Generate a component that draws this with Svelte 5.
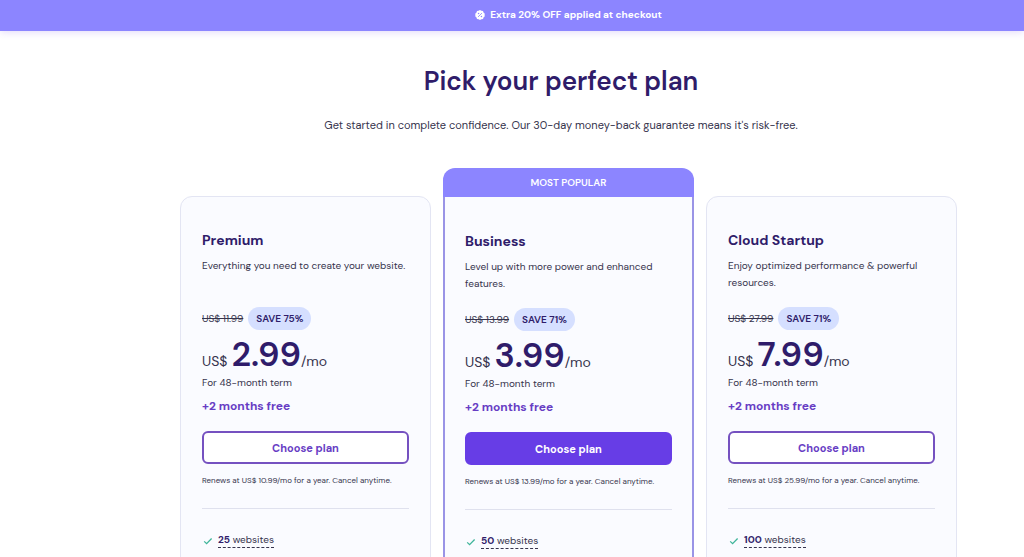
<script lang="ts">
  const plans = [
    { name: "Premium", about: "Everything you need to create your website.", old: "11.99", save: 75, price: "2.99", renew: "10.99", sites: 25, popular: false },
    { name: "Business", about: "Level up with more power and enhanced features.", old: "13.99", save: 71, price: "3.99", renew: "13.99", sites: 50, popular: true },
    { name: "Cloud Startup", about: "Enjoy optimized performance & powerful resources.", old: "27.99", save: 71, price: "7.99", renew: "25.99", sites: 100, popular: false },
  ];
</script>

<div class="banner">
  <svg width="10" height="10" viewBox="0 0 24 24" aria-hidden="true">
    <path fill="#fff" d="M12 0l3.4 2 3.8.3 1.2 3.6L23.5 9 23 12l.5 3-3.1 3.1-1.2 3.6-3.8.3L12 24l-3.4-2-3.8-.3-1.2-3.6L.5 15 1 12 .5 9l3.1-3.1 1.2-3.6 3.8-.3z" />
    <path stroke="#8c85ff" stroke-width="2" stroke-linecap="round" d="M8 16l8-8" />
    <circle cx="8.5" cy="8.5" r="1.8" fill="#8c85ff" />
    <circle cx="15.5" cy="15.5" r="1.8" fill="#8c85ff" />
  </svg>
  <span>Extra 20% OFF applied at checkout</span>
</div>

<main>
  <header>
    <h1>Pick your perfect plan</h1>
    <p>Get started in complete confidence. Our 30-day money-back guarantee means it's risk-free.</p>
  </header>

  <div class="plans">
    {#each plans as plan}
      <section class="plan" class:popular={plan.popular}>
        {#if plan.popular}
          <div class="ribbon">MOST POPULAR</div>
        {/if}
        <div class="body">
          <h2>{plan.name}</h2>
          <p class="about">{plan.about}</p>
          <div class="discount">
            <s>US$ {plan.old}</s>
            <span class="save">SAVE {plan.save}%</span>
          </div>
          <div class="price">
            <span>US$</span>
            <strong>{plan.price}</strong>
            <span>/mo</span>
          </div>
          <p class="term">For 48-month term</p>
          <p class="bonus">+2 months free</p>
          <button type="button">Choose plan</button>
          <p class="renew">Renews at US$ {plan.renew}/mo for a year. Cancel anytime.</p>
          <ul>
            <li>
              <svg width="10" height="10" viewBox="0 0 10 10" aria-hidden="true">
                <path d="M1.2 5.4l2.4 2.3 5-5.2" fill="none" stroke="#3fb59a" stroke-width="1.3" />
              </svg>
              <span class="feature"><b>{plan.sites}</b> websites</span>
            </li>
          </ul>
        </div>
      </section>
    {/each}
  </div>
</main>

<style>
  :global(body) {
    background: #fff;
    color: #36344d;
    font-family: "DM Sans", Inter, sans-serif;
  }

  h1, h2, p, ul {
    margin: 0;
    padding: 0;
  }

  .banner {
    display: flex;
    align-items: center;
    justify-content: center;
    gap: 5px;
    height: 29px;
    padding: 0 0 2px 113px;
    background: #8c85ff;
    box-shadow: 0 1px 8px rgba(103, 61, 230, 0.2);
    color: #fff;
    font-size: 10px;
    font-weight: 700;
  }

  main {
    padding: 32px 0 0 113px;
  }

  header {
    padding-right: 15px;
    text-align: center;
  }

  h1 {
    color: #2f1c6a;
    font-size: 26px;
    font-weight: 600;
    line-height: 36px;
  }

  header p {
    margin-top: 17px;
    font-size: 11px;
    line-height: 18px;
  }

  .plans {
    display: grid;
    grid-template-columns: repeat(3, minmax(0, 1fr));
    gap: 12px;
    max-width: 777px;
    margin: 34px auto 0;
  }

  .plan {
    display: flex;
    flex-direction: column;
    padding-top: 28px;
  }

  .popular {
    padding-top: 0;
  }

  .ribbon {
    border-radius: 12px 12px 0 0;
    background: #8c85ff;
    color: #fff;
    font-size: 10px;
    font-weight: 600;
    line-height: 29px;
    text-align: center;
  }

  .body {
    flex: 1;
    padding: 33px 21px 40px;
    border: 1px solid #e3e5f3;
    border-radius: 12px;
    background: #fafbff;
  }

  .popular .body {
    padding: 34px 20px 40px;
    border: 2px solid #9a94e6;
    border-top: 0;
    border-radius: 0 0 12px 12px;
  }

  h2 {
    color: #2f1c6a;
    font-size: 14px;
    font-weight: 700;
    line-height: 20px;
  }

  .about {
    min-height: 34px;
    margin-top: 7px;
    font-size: 10px;
    line-height: 17px;
  }

  .discount {
    display: flex;
    align-items: center;
    gap: 5px;
    margin-top: 16px;
    font-size: 10px;
  }

  .save {
    padding: 0 8px;
    border-radius: 12px;
    background: #d5dfff;
    color: #2f1c6a;
    font-weight: 600;
    line-height: 23px;
  }

  .price {
    display: flex;
    align-items: baseline;
    margin-top: 5px;
    font-size: 14px;
    line-height: 20px;
  }

  .price strong {
    margin-left: 4px;
    color: #2f1c6a;
    font-size: 34px;
    font-weight: 600;
    line-height: 40px;
  }

  .term {
    font-size: 10px;
    line-height: 16px;
  }

  .bonus {
    margin-top: 5px;
    color: #673dc4;
    font-size: 12px;
    font-weight: 700;
    line-height: 20px;
  }

  button {
    display: block;
    width: 100%;
    height: 33px;
    margin-top: 15px;
    padding: 0;
    border: 2px solid #7551c0;
    border-radius: 6px;
    background: #fff;
    color: #673dc4;
    font: 700 11px "DM Sans", Inter, sans-serif;
    cursor: pointer;
  }

  .popular button {
    border-color: #673de6;
    background: #673de6;
    color: #fff;
  }

  .renew {
    margin-top: 10px;
    font-size: 8px;
    line-height: 12px;
    white-space: nowrap;
  }

  ul {
    margin-top: 22px;
    padding-top: 24px;
    border-top: 1px solid #dfe1ee;
    list-style: none;
  }

  li {
    display: flex;
    align-items: center;
    gap: 5px;
    padding-left: 1px;
    font-size: 10px;
  }

  .feature {
    border-bottom: 1px dashed #36344d;
    line-height: 14px;
  }

  .feature b {
    color: #2f1c6a;
  }
</style>
